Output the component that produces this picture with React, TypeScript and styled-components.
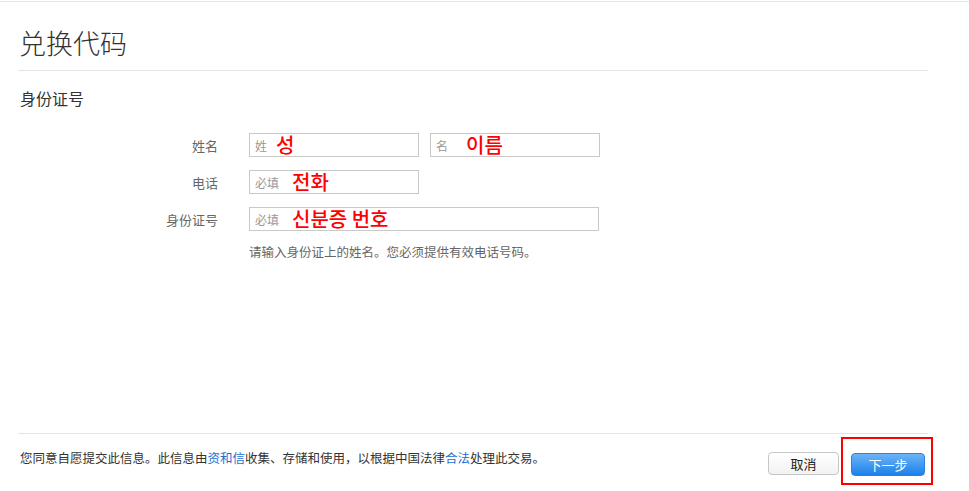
import styled, { createGlobalStyle } from 'styled-components';

const GlobalStyle = createGlobalStyle`
    html, body {
        margin: 0;
        background: #ffffff;
        font-family: "Noto Sans CJK SC", "Liberation Sans", sans-serif;
        color: #333;
    }
`;

const Page = styled.div`
    display: flex;
    flex-direction: column;
    height: 100vh;
`;

const TopRule = styled.div`
    height: 1px;
    margin-top: 1px;
    background-color: #e6e6e6;
`;

const Content = styled.main`
    flex: 1;
    padding: 0 41px 0 18px;
`;

const Header = styled.header`
    height: 69px;
    box-sizing: border-box;
    padding: 24px 0 0 1px;
    border-bottom: 1px solid #e3e3e3;
`;

const Title = styled.h1`
    margin: 0;
    font-size: 27px;
    line-height: 34px;
    font-weight: 300;
    color: #333;
`;

const SectionTitle = styled.h2`
    margin: 15px 0 0 2px;
    font-size: 16px;
    line-height: 24px;
    font-weight: normal;
    color: #333;
`;

const Form = styled.div`
    display: flex;
    flex-direction: column;
    gap: 13px;
    margin-top: 23px;
`;

const Row = styled.div`
    display: flex;
    align-items: center;
`;

const Label = styled.label`
    width: 200px;
    margin-right: 31px;
    text-align: right;
    font-size: 13px;
    color: #666;
`;

const Fields = styled.div`
    display: flex;
    gap: 11px;
`;

const Field = styled.div<{ $wide?: boolean }>`
    display: flex;
    align-items: center;
    box-sizing: border-box;
    width: ${p => (p.$wide ? '350px' : '170px')};
    height: 24px;
    padding: 0 5px;
    border: 1px solid #c9c9c9;
    background: #fff;
`;

const Placeholder = styled.span`
    font-size: 12px;
    color: #999;
`;

const Note = styled.span<{ $gap: number }>`
    margin-left: ${p => p.$gap}px;
    font-family: "Noto Sans CJK KR", sans-serif;
    font-size: 20px;
    font-weight: 500;
    line-height: 22px;
    color: #ff0000;
`;

const Hint = styled.p`
    margin: 12px 0 0 231px;
    font-size: 12.5px;
    line-height: 18px;
    color: #666;
`;

const Footer = styled.footer`
    display: flex;
    justify-content: space-between;
    align-items: flex-start;
    height: 58px;
    margin: 0 41px 0 18px;
    padding-top: 3px;
    box-sizing: border-box;
    border-top: 1px solid #e3e3e3;
`;

const Consent = styled.p`
    margin: 12px 0 0 2px;
    font-size: 12.5px;
    line-height: 18px;
    color: #333;
`;

const Link = styled.a`
    color: #1a6fd1;
    text-decoration: none;
`;

const Actions = styled.div`
    display: flex;
    align-items: flex-start;
    gap: 2px;
    margin-right: -5px;
`;

const Button = styled.button<{ $primary?: boolean }>`
    box-sizing: border-box;
    height: 23px;
    border-radius: 4px;
    font-family: inherit;
    font-size: 13px;
    line-height: 1;
    cursor: pointer;
    border: 1px solid ${p => (p.$primary ? '#2b83de' : '#c6c6c6')};
    color: ${p => (p.$primary ? '#fff' : '#222')};
    background: ${p => (p.$primary
        ? 'linear-gradient(#6cb4f8, #1c80ea)'
        : 'linear-gradient(#ffffff, #f2f2f2)')};
`;

const CancelButton = styled(Button)`
    width: 71px;
    margin-top: 15px;
`;

const NextButton = styled(Button)`
    width: 74px;
`;

const Highlight = styled.div`
    padding: 12px 6px 7px 8px;
    border: 2px solid #ff0000;
`;

export default function App() {
    return (
        <Page>
            <GlobalStyle/>
            <TopRule/>
            <Content>
                <Header>
                    <Title>兑换代码</Title>
                </Header>
                <SectionTitle>身份证号</SectionTitle>
                <Form>
                    <Row>
                        <Label>姓名</Label>
                        <Fields>
                            <Field>
                                <Placeholder>姓</Placeholder>
                                <Note $gap={9}>성</Note>
                            </Field>
                            <Field>
                                <Placeholder>名</Placeholder>
                                <Note $gap={18}>이름</Note>
                            </Field>
                        </Fields>
                    </Row>
                    <Row>
                        <Label>电话</Label>
                        <Field>
                            <Placeholder>必填</Placeholder>
                            <Note $gap={13}>전화</Note>
                        </Field>
                    </Row>
                    <Row>
                        <Label>身份证号</Label>
                        <Field $wide>
                            <Placeholder>必填</Placeholder>
                            <Note $gap={13}>신분증 번호</Note>
                        </Field>
                    </Row>
                </Form>
                <Hint>请输入身份证上的姓名。您必须提供有效电话号码。</Hint>
            </Content>
            <Footer>
                <Consent>
                    您同意自愿提交此信息。此信息由<Link href="#">资和信</Link>收集、存储和使用，以根据中国法律<Link href="#">合法</Link>处理此交易。
                </Consent>
                <Actions>
                    <CancelButton>取消</CancelButton>
                    <Highlight>
                        <NextButton $primary>下一步</NextButton>
                    </Highlight>
                </Actions>
            </Footer>
        </Page>
    );
}
